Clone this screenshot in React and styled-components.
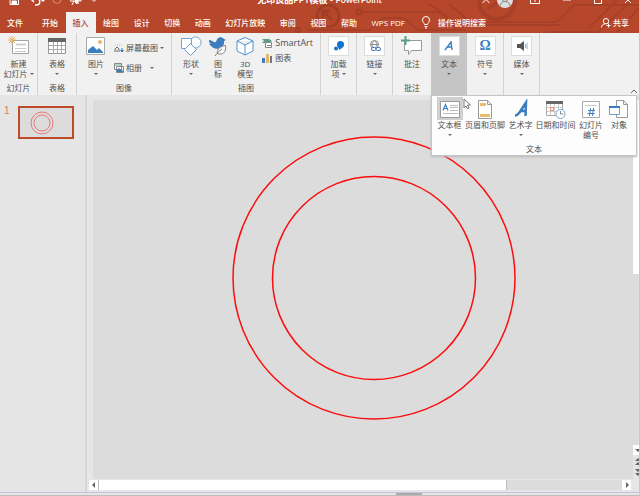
import { useState } from "react";
import styled, { createGlobalStyle } from "styled-components";

const tabs = ["开始", "插入", "绘图", "设计", "切换", "动画", "幻灯片放映", "审阅", "视图", "帮助", "WPS PDF"];

function App() {
  const [activeTab, setActiveTab] = useState("插入");
  const [textOpen, setTextOpen] = useState(true);

  return (
    <Window>
      <GlobalStyle />
      <Header>
        <Circuit />
        <TitleBar>
          <TitleRow>
            <QuickAccess>
              <TitleButton aria-label="保存" $width={28}><SaveIcon /></TitleButton>
              <TitleButton aria-label="撤消" $width={18}><UndoIcon /></TitleButton>
              <TitleButton aria-label="恢复" $width={22}><RedoIcon /></TitleButton>
              <TitleButton aria-label="从头开始" $width={16}><ShowIcon /></TitleButton>
              <TitleButton aria-label="自定义" $width={20}><ChevronIcon /></TitleButton>
            </QuickAccess>
            <Title>无印良品PPT模板 - PowerPoint</Title>
            <WindowButtons>
              <TitleButton aria-label="折叠" $width={18}><CaretUpIcon /></TitleButton>
              <TitleButton aria-label="帐户" $width={20}><AvatarIcon /></TitleButton>
              <TitleButton aria-label="功能区显示选项" $width={40}><RibbonIcon /></TitleButton>
              <TitleButton aria-label="最小化" $width={24}><MinIcon /></TitleButton>
              <TitleButton aria-label="最大化" $width={37}><MaxIcon /></TitleButton>
              <TitleButton aria-label="关闭" $width={23}><CloseIcon /></TitleButton>
            </WindowButtons>
          </TitleRow>
        </TitleBar>
        <TabBar>
          <FileTab>文件</FileTab>
          <Tabs>
            {tabs.map((tab) => (
              <Tab key={tab} $active={tab === activeTab} onClick={() => setActiveTab(tab)}>
                {tab}
              </Tab>
            ))}
          </Tabs>
          <Search><BulbIcon />操作说明搜索</Search>
          <Share><PersonIcon />共享</Share>
        </TabBar>
      </Header>

      <Ribbon>
        <Group $width={38}>
          <Tool><NewSlideIcon /><span>新建</span><Drop>幻灯片</Drop></Tool>
          <GroupName>幻灯片</GroupName>
        </Group>
        <Group $width={39}>
          <Tool><TableIcon /><span>表格</span><Drop /></Tool>
          <GroupName>表格</GroupName>
        </Group>
        <Group $width={95}>
          <GroupBody>
            <Tool><PictureIcon /><span>图片</span><Drop /></Tool>
            <SmallTools $gap={10}>
              <SmallTool><ScreenshotIcon /><Drop>屏幕截图</Drop></SmallTool>
              <SmallTool><AlbumIcon /><Drop $gap={8}>相册</Drop></SmallTool>
            </SmallTools>
          </GroupBody>
          <GroupName>图像</GroupName>
        </Group>
        <Group $width={149}>
          <GroupBody>
            <Tool><ShapesIcon /><span>形状</span><Drop /></Tool>
            <Tool $width={20}><BirdIcon /><span>图</span><span>标</span></Tool>
            <Tool><CubeIcon /><span>3D</span><span>模型</span></Tool>
            <SmallTools $gap={5}>
              <SmallTool $large><SmartArtIcon />SmartArt</SmallTool>
              <SmallTool><ChartIcon />图表</SmallTool>
            </SmallTools>
          </GroupBody>
          <GroupName>插图</GroupName>
        </Group>
        <Group $width={36}>
          <Tool><Tile><AddInIcon /></Tile><span>加载</span><Drop>项</Drop></Tool>
        </Group>
        <Group $width={36}>
          <Tool><Tile><LinkIcon /></Tile><span>链接</span><Drop /></Tool>
        </Group>
        <Group $width={38} $plain>
          <Tool><CommentIcon /><span>批注</span></Tool>
          <GroupName>批注</GroupName>
        </Group>
        <Group $width={36} $pressed={textOpen} $plain>
          <Tool aria-expanded={textOpen} onClick={() => setTextOpen(!textOpen)}>
            <Tile><SmallLetterIcon /></Tile><span>文本</span><Drop />
          </Tool>
        </Group>
        <Group $width={37}>
          <Tool><Tile><Omega>Ω</Omega></Tile><span>符号</span><Drop /></Tool>
        </Group>
        <Group $width={36}>
          <Tool><Tile><SpeakerIcon /></Tile><span>媒体</span><Drop /></Tool>
        </Group>
        <Collapse aria-label="折叠功能区"><CollapseIcon /></Collapse>

        {textOpen && (
          <Popup>
            <PopupTools>
              <PopupTool $width={27} $hover><TextBoxIcon /><span>文本框</span><Drop /></PopupTool>
              <PopupTool $width={42}><HeaderFooterIcon /><span>页眉和页脚</span></PopupTool>
              <PopupTool $width={27}><WordArtIcon /><span>艺术字</span><Drop /></PopupTool>
              <PopupTool $width={41}><DateIcon /><span>日期和时间</span></PopupTool>
              <PopupTool $width={28}><NumberIcon /><span>幻灯片</span><span>编号</span></PopupTool>
              <PopupTool $width={26}><ObjectIcon /><span>对象</span></PopupTool>
            </PopupTools>
            <GroupName>文本</GroupName>
            <Pointer />
          </Popup>
        )}
      </Ribbon>

      <Workspace>
        <Thumbnails>
          <SlideNumber>1</SlideNumber>
          <Thumbnail aria-label="幻灯片 1">
            <svg width="24" height="24" viewBox="0 0 24 24" fill="none" stroke="#e87a7a">
              <circle cx="12" cy="12" r="11" />
              <circle cx="12" cy="12" r="8" />
            </svg>
          </Thumbnail>
        </Thumbnails>
        <Editor>
          <Stage>
            <Slide>
              <svg width="284" height="284" viewBox="0 0 284 284" fill="none" stroke="#fb0d0d" strokeWidth="1.5">
                <circle cx="142" cy="142" r="141" />
                <circle cx="142" cy="142" r="101.5" />
              </svg>
            </Slide>
            <VerticalBar>
              <VerticalThumb />
              <ScrollButton aria-label="向下"><Arrow d="M1 3h6l-3 3z" /></ScrollButton>
              <PageButton aria-label="上一张"><Arrow d="M1 4l3-3 3 3zM1 8l3-3 3 3z" /></PageButton>
              <PageButton aria-label="下一张"><Arrow d="M1 0h6l-3 3zM1 4h6l-3 3z" /></PageButton>
            </VerticalBar>
          </Stage>
          <HorizontalBar>
            <ScrollButton aria-label="向左"><Arrow d="M5 1v6l-3-3z" /></ScrollButton>
            <HorizontalTrack><HorizontalThumb /></HorizontalTrack>
            <ScrollButton aria-label="向右"><Arrow d="M3 1v6l3-3z" /></ScrollButton>
          </HorizontalBar>
        </Editor>
      </Workspace>
      <NotesEdge><NotesGrip /></NotesEdge>
    </Window>
  );
}

export default App;

/* icons */

function Icon({ w = 20, h = 20, children }) {
  return (
    <svg width={w} height={h} viewBox={`0 0 ${w} ${h}`} fill="none" stroke="currentColor" aria-hidden="true">
      {children}
    </svg>
  );
}

const Arrow = ({ d }) => (
  <Icon w={8} h={8}><path d={d} fill="#666" stroke="none" /></Icon>
);

const SaveIcon = () => (
  <Icon w={10} h={10}><path d="M1 .5h8.500v9h-8.500zM3 .5v3h4v-3" /><path d="M3 6h4.500v3.500h-4.500z" fill="currentColor" /></Icon>
);
const UndoIcon = () => (
  <Icon w={16} h={12}><path d="M5 1L1.500 4.500 5 8M2 4.500h5.500a3 3 0 0 1 0 6.500H6" strokeWidth="1.500" /><path d="M12 6h4l-2 2z" fill="currentColor" stroke="none" /></Icon>
);
const RedoIcon = () => (
  <Icon w={12} h={12}><path d="M9 2a4.200 4.200 0 1 1-6 0" stroke="#d4816c" strokeWidth="1.300" /></Icon>
);
const ShowIcon = () => (
  <Icon w={12} h={14}><path d="M0 3h11v5H0zM4 8l-2 4M5 8l2 3" /><path d="M5 4l6 3-3 1 1 3-4-1z" fill="currentColor" stroke="none" /></Icon>
);
const ChevronIcon = () => <Icon w={6} h={6}><path d="M1 2.500l2 2 2-2" /></Icon>;
const CaretUpIcon = () => <Icon w={10} h={8}><path d="M1.500 7L5 3.500 8.500 7" /></Icon>;
const AvatarIcon = () => (
  <Icon w={16} h={16}>
    <circle cx="8" cy="8" r="8" fill="#dedede" stroke="none" />
    <circle cx="8" cy="6.500" r="3" stroke="#888" />
    <path d="M3 14c0-6 10-6 10 0" stroke="#888" />
  </Icon>
);
const RibbonIcon = () => <Icon w={10} h={8}><path d="M.5 0v7.500h9V0M5 1v5M.5 3.500h9" /></Icon>;
const MinIcon = () => <Icon w={8} h={2}><path d="M0 1h8" /></Icon>;
const MaxIcon = () => <Icon w={8} h={7}><path d="M.5 .5h7v6h-7z" /></Icon>;
const CloseIcon = () => <Icon w={8} h={8}><path d="M1 1l6 6M7 1L1 7" /></Icon>;
const BulbIcon = () => (
  <Icon w={10} h={13}><path d="M3.500 8.500C3.500 7 1.500 6.500 1.500 4a3.500 3.500 0 0 1 7 0c0 2.500-2 3-2 4.500zM3.500 10.500h3M4 12h2" /></Icon>
);
const PersonIcon = () => (
  <Icon w={10} h={10}><circle cx="5" cy="3.200" r="2.700" /><path d="M.5 9.500c0-2 1.500-3.500 3.500-3.500M7.500 5.500v4M5.500 7.500h4" /></Icon>
);

function Circuit() {
  return (
    <Backdrop width="640" height="33" viewBox="0 0 640 33" fill="none" stroke="#a23e25" strokeWidth="2" aria-hidden="true">
      <circle cx="329" cy="16" r="11" strokeWidth="3" />
      <path d="M333 20l-8-8M324 18v-7h7" strokeWidth="3" />
      <circle cx="360" cy="12" r="2.500" />
      <path d="M363 12h77l13 10h105l17-17h65M308 30h63l12-12h22l14 12h48" stroke="#a74028" />
      <path d="M430 4l17 11 12 16M450 4l25 21h86" stroke="#a74028" />
      <circle cx="498" cy="1" r="18" strokeWidth="4" stroke="#a74028" />
      <path d="M489 9l20-14" strokeWidth="3" stroke="#a74028" />
      <path d="M547 32h52l34-32M618 0l-28 28M640 8l-22 24" stroke="#a74028" />
      <circle cx="299" cy="30" r="2" />
    </Backdrop>
  );
}

const NewSlideIcon = () => (
  <Icon w={22}>
    <path d="M4.500 4.500h16v13h-16z" fill="#fff" stroke="#a3a3a3" />
    <path d="M8 7.500h10v2H8z" fill="#ccc" stroke="none" />
    <path d="M7 12.500h11M7 15.500h11" stroke="#ccc" />
    <path d="M4 0v8M0 4h8M1 1l6 6M7 1L1 7" stroke="#ecae63" />
  </Icon>
);
const TableIcon = () => (
  <Icon w={20}>
    <path d="M1.500 3.500h17v14h-17z" fill="#fff" stroke="#999" />
    <path d="M1 2h18v4H1z" fill="#666" stroke="none" />
    <path d="M2 9.500h16M2 13.500h16M6.500 6v12M10.500 6v12M14.500 6v12" stroke="#aaa" />
  </Icon>
);
const PictureIcon = () => (
  <Icon w={20}>
    <path d="M.5 1.500h18v17H.5z" fill="#fff" stroke="#aaa" />
    <path d="M2 17v-3l5-4 4 4 2-2 4 4v1z" fill="#3c7dbd" stroke="none" />
    <circle cx="14" cy="6" r="2" fill="#efb568" stroke="none" />
  </Icon>
);
const ScreenshotIcon = () => (
  <Icon w={10} h={9}>
    <path d="M1 1h7" stroke="#bbb" strokeDasharray="1 1" />
    <path d="M1 8V5l2-2 2 2v3M3 8V6" stroke="#666" />
    <path d="M8 4v3M6.500 6.500h3L8 8z" stroke="#3c7dbd" fill="#3c7dbd" />
  </Icon>
);
const AlbumIcon = () => (
  <Icon w={10} h={10}>
    <path d="M.5 .5h7v6h-7zM2.500 3.500h7v6h-7z" stroke="#888" fill="#fff" />
    <path d="M3 9V7l2-2 2 2 1-1 1 3z" fill="#3c7dbd" stroke="none" />
    <path d="M1 2h6" stroke="#65a68e" />
  </Icon>
);
const ShapesIcon = () => (
  <Icon w={22}>
    <circle cx="15.500" cy="6.500" r="5.500" stroke="#75a5cf" fill="#fff" />
    <path d="M1.500 2.500h10v10h-10z" stroke="#75a5cf" fill="#fff" />
    <path d="M10.500 7.500l6 6-6 6-6-6z" stroke="#6d9ecb" fill="#fff" />
  </Icon>
);
const BirdIcon = () => (
  <Icon w={20}>
    <path d="M1 4c3 0 4 3 7 2 1-5 5-6 8-3l2 1-2 1c1 7-7 10-12 6l-3-3h2C1 7 1 6 1 4z" fill="#3c7dbd" stroke="none" />
    <path d="M17.500 9.500c1 7-3 10-8 8-1-5 3-7 8-8zM7 20c2-3 4-5 7-7" stroke="#888" fill="#f6f6f6" />
  </Icon>
);
const CubeIcon = () => (
  <Icon w={18}>
    <path d="M9 1.500l8 3.500v10l-8 4-8-4V5zM1 5l8 4 8-4M9 9v10" stroke="#4d93cf" fill="#fff" />
  </Icon>
);
const SmartArtIcon = () => (
  <Icon w={11} h={9}>
    <path d="M0 0h7l3 2-3 2H0l2-2z" fill="#5c9f82" stroke="none" />
    <path d="M3.500 3.500h6v5h-6zM5 6.500h4" stroke="#888" fill="#fff" />
  </Icon>
);
const ChartIcon = () => (
  <Icon w={11} h={10}>
    <path d="M0 5h3v5H0z" fill="#3c7dbd" stroke="none" />
    <path d="M4 1h3v9H4z" fill="#e9b56b" stroke="none" />
    <path d="M8 3h2v7H8z" fill="#777" stroke="none" />
  </Icon>
);
const AddInIcon = () => (
  <Icon w={12} h={12}>
    <circle cx="7.500" cy="4.500" r="3.500" fill="#0d73cb" stroke="none" />
    <circle cx="3" cy="8.500" r="2" fill="#0d73cb" stroke="none" />
    <path d="M5 5l4 3-3 2z" fill="#0d73cb" stroke="none" />
  </Icon>
);
const LinkIcon = () => (
  <Icon w={12} h={12}>
    <circle cx="5.500" cy="4.500" r="4" stroke="#888" />
    <path d="M1.500 4.500h8M5.500 .5c-3 3-3 5 0 8M5.500 .5c3 3 3 5 0 8" stroke="#888" />
    <rect x="2.500" y="7.500" width="4.500" height="3" rx="1.500" stroke="#4078b5" fill="#fff" />
    <rect x="7" y="7.500" width="4.500" height="3" rx="1.500" stroke="#4078b5" fill="#fff" />
  </Icon>
);
const CommentIcon = () => (
  <Icon w={22}>
    <path d="M3.500 4.500h17v10h-10l-3 4v-4h-4z" fill="#fff" stroke="#999" />
    <path d="M4.500 0v9M0 4.500h9" stroke="#5c9f82" strokeWidth="2" />
  </Icon>
);
const SmallLetterIcon = () => (
  <Icon w={10} h={10}>
    <path d="M1 9l6-8 1 8M3.500 6h4" stroke="#3c7dbd" strokeWidth="1.400" />
  </Icon>
);
const WordArtIcon = () => (
  <Icon w={20}>
    <path d="M4 16.500c2 0 3-1 4.500-3L15 3.500l-.5 13.500M8.500 12h6.500" stroke="#3c7dbd" strokeWidth="2.500" />
  </Icon>
);
const SpeakerIcon = () => (
  <Icon w={12} h={12}>
    <path d="M1 4h3l4-3v10L4 8H1z" fill="#555" stroke="none" />
    <path d="M9.500 4v4M11 2.500v7" stroke="#8db7db" />
  </Icon>
);
const CollapseIcon = () => <Icon w={8} h={6}><path d="M1 5l3-3 3 3" stroke="#666" /></Icon>;
const TextBoxIcon = () => (
  <Icon w={20}>
    <path d="M.5 2.500h19v16H.5z" fill="#fff" stroke="#999" />
    <path d="M3 11.500l2.500-6 2.500 6M4 9.500h3" stroke="#3c7dbd" strokeWidth="1.200" />
    <path d="M10 6.500h8M10 8.500h8M10 11.500h8M3 14.500h15" stroke="#bbb" />
  </Icon>
);
const HeaderFooterIcon = () => (
  <Icon w={16}>
    <path d="M1.500 1.500h9l4 4v14h-13zM10.500 1.500v4h4" fill="#fff" stroke="#999" />
    <path d="M3 4h6v3H3zM3 15h10v3H3z" fill="#e9bd6c" stroke="none" />
  </Icon>
);
const DateIcon = () => (
  <Icon w={20}>
    <path d="M.5 2.500h16v14H.5z" fill="#fff" stroke="#aaa" />
    <path d="M0 2h17v3H0z" fill="#666" stroke="none" />
    <path d="M1 8.500h15M1 12.500h15M4.500 5v11M8.500 5v11M12.500 5v11" stroke="#ccc" />
    <path d="M4.500 8.500h3v3h-3z" stroke="#ea8e72" />
    <circle cx="14.500" cy="15" r="4.500" fill="#fff" stroke="#7aa8d2" />
    <path d="M14.500 12v3h3" stroke="#888" />
  </Icon>
);
const NumberIcon = () => (
  <Icon w={20}>
    <path d="M1.500 2.500h17v16h-17z" fill="#fff" stroke="#aaa" />
    <path d="M4 6.500h12" stroke="#ccc" />
    <path d="M9.500 9l-1 8M12.500 9l-1 8M7 11.500h7M6.500 14.500h7" stroke="#3c7dbd" />
  </Icon>
);
const ObjectIcon = () => (
  <Icon w={20}>
    <path d="M7.500 1.500h7l4 4v13h-11zM14.500 1.500v4h4" fill="#fff" stroke="#999" />
    <path d="M.5 7.500h10v8H.5z" fill="#fff" stroke="#6fa3d0" />
    <path d="M0 7h11v2H0z" fill="#3c7dbd" stroke="none" />
  </Icon>
);

function Pointer() {
  return (
    <Cursor width="8" height="12" viewBox="0 0 8 12" aria-hidden="true">
      <path d="M1 1v9l2-2 1.500 3 1.500-1-1.500-3h3z" fill="#fff" stroke="#777" />
    </Cursor>
  );
}

/* styles */

const GlobalStyle = createGlobalStyle`
  * {
    box-sizing: border-box;
  }

  body {
    margin: 0;
    background: #e6e6e6;
    color: #505050;
    font: 8px/10px "Open Sans", "Noto Sans CJK SC", sans-serif;
  }

  button {
    display: flex;
    align-items: center;
    padding: 0;
    border: 0;
    background: none;
    color: inherit;
    font: inherit;
    white-space: nowrap;
    cursor: pointer;
  }

  svg {
    display: block;
    flex: none;
  }
`;

const Window = styled.div`
  display: flex;
  flex-direction: column;
  min-height: 100vh;
  border-right: 1px solid #c9c9c9;
`;

const Header = styled.header`
  position: relative;
  overflow: hidden;
  background: #b7472a;
  color: #fff;
`;

const Backdrop = styled.svg`
  position: absolute;
  top: 0;
  right: 0;
`;

const TitleBar = styled.div`
  position: relative;
  display: flex;
  align-items: flex-end;
  height: 12px;
`;

const TitleRow = styled.div`
  display: flex;
  flex: 1;
  align-items: center;
  height: 24px;
`;

const QuickAccess = styled.div`
  display: flex;
  flex: 1;
`;

const WindowButtons = styled(QuickAccess)`
  justify-content: flex-end;
`;

const TitleButton = styled.button`
  justify-content: center;
  width: ${(props) => props.$width}px;
  height: 24px;
`;

const Title = styled.h1`
  margin: 0;
  font-family: Lato, "Noto Sans CJK SC", sans-serif;
  font-size: 9px;
  font-weight: 600;
  white-space: nowrap;
`;

const TabBar = styled.div`
  position: relative;
  display: flex;
  height: 21px;
`;

const FileTab = styled.button`
  padding: 0 12px 0 7px;
  font-weight: 500;
`;

const Tabs = styled.nav`
  display: flex;
  flex: 0 1 59%;
  justify-content: space-between;
`;

const Tab = styled.button`
  padding: 0 7px;
  font-weight: 500;
  background: ${(props) => (props.$active ? "#f1f1f1" : "none")};
  color: ${(props) => (props.$active ? "#b7472a" : "#fff")};
`;

const Search = styled.button`
  gap: 7px;
  padding-left: 9px;
  font-weight: 500;
`;

const Share = styled.button`
  gap: 2px;
  margin-left: auto;
  padding-right: 10px;
  font-weight: 500;
`;

const Ribbon = styled.section`
  position: relative;
  display: flex;
  height: 62px;
  background: #f1f1f1;
`;

const Group = styled.div`
  display: flex;
  flex-direction: column;
  flex: 0 0 ${(props) => props.$width}px;
  justify-content: space-between;
  align-items: center;
  min-width: 0;
  padding: 3px 0 2px;
  background: ${(props) => (props.$pressed ? "#c5c5c5" : "none")};
  border-right: ${(props) => (props.$plain ? "0" : "1px solid #d2d2d2")};
`;

const GroupBody = styled.div`
  display: flex;
  align-self: stretch;
  justify-content: space-between;
  padding: 0 7px 0 2px;
`;

const GroupName = styled.div`
  text-align: center;
`;

const Tool = styled.button`
  flex-direction: column;
  width: ${(props) => props.$width || 34}px;

  > svg {
    margin-bottom: 3px;
  }
`;

const Tile = styled.span`
  display: flex;
  align-items: center;
  justify-content: center;
  width: 21px;
  height: 20px;
  margin-bottom: 3px;
  border: 1px solid #dcdcdc;
  background: #fff;
`;

const Omega = styled.span`
  color: #3c7dbd;
  font: bold 14px/16px "Liberation Serif", serif;
`;

const Drop = styled.span`
  display: flex;
  align-items: center;
  gap: ${(props) => props.$gap || 2}px;
  min-height: 10px;

  &::after {
    content: "";
    border: 2px solid transparent;
    border-top-color: #666;
    border-bottom: 0;
  }
`;

const SmallTools = styled.div`
  display: flex;
  flex-direction: column;
  gap: ${(props) => props.$gap}px;
  padding-top: ${(props) => (props.$gap > 5 ? 7 : 2)}px;
`;

const SmallTool = styled.button`
  gap: 2px;
  font-size: ${(props) => (props.$large ? 9 : 8)}px;
`;

const Collapse = styled.button`
  align-self: flex-end;
  margin-left: auto;
  padding: 0 1px 1px;
`;

const Popup = styled.div`
  position: absolute;
  top: 100%;
  right: 2px;
  z-index: 1;
  padding-bottom: 1px;
  border: 1px solid #c6c6c6;
  background: #fdfdfd;
  box-shadow: 0 1px 2px #bbb;
`;

const PopupTools = styled.div`
  display: flex;
  gap: 1px;
  padding: 1px 4px 4px;
`;

const PopupTool = styled.button`
  flex-direction: column;
  justify-content: flex-start;
  width: ${(props) => props.$width}px;

  > svg {
    box-sizing: content-box;
    padding: 2px 3px 1px;
    background: ${(props) => (props.$hover ? "#d0d0d0" : "none")};
  }
`;

const Cursor = styled.svg`
  position: absolute;
  top: 2px;
  left: 31px;
`;

const Workspace = styled.main`
  display: flex;
  flex: 1;
`;

const Thumbnails = styled.aside`
  display: flex;
  align-items: flex-start;
  flex: 0 0 87px;
  gap: 8px;
  padding: 11px 0 0 4px;
  border-right: 2px solid #d7d7d7;
  background: #e5e5e5;
`;

const SlideNumber = styled.span`
  color: #df7866;
  font: 10px/10px "Liberation Sans", sans-serif;
`;

const Thumbnail = styled.button`
  width: 56px;
  height: 33px;
  padding-left: 10px;
  border: 2px solid #be4a2c;
  background: #dcdcdc;
`;

const Editor = styled.section`
  display: flex;
  flex: 1;
  flex-direction: column;
`;

const Stage = styled.div`
  display: flex;
  flex: 1;
  padding: 5px 0 0 6px;
`;

const Slide = styled.div`
  display: flex;
  flex: 1;
  justify-content: center;
  align-items: flex-start;
  padding: 36px 0 0 22px;
  background: #dcdcdc;
`;

const VerticalBar = styled.div`
  display: flex;
  flex-direction: column;
  width: 6px;
  overflow: hidden;
  background: #dcdcdc;
`;

const VerticalThumb = styled.div`
  height: 46%;
  margin-bottom: auto;
  background: #fff;
`;

const ScrollButton = styled.button`
  justify-content: center;
  min-width: 9px;
  height: 10px;
  background: #fff;
`;

const PageButton = styled(ScrollButton)`
  height: 12px;
  background: #e5e5e5;
`;

const HorizontalBar = styled.div`
  display: flex;
  margin-left: 2px;
  padding: 1px 8px 2px 0;
`;

const HorizontalTrack = styled.div`
  flex: 1;
  background: #dcdcdc;
`;

const HorizontalThumb = styled.div`
  width: 78%;
  height: 10px;
  border: solid #bdbdbd;
  border-width: 0 1px;
  background: #fff;
`;

const NotesEdge = styled.footer`
  height: 4px;
  border-top: 1px solid #c0c6d2;
  border-bottom: 1px solid #bdbdbd;
`;

const NotesGrip = styled.div`
  width: 26px;
  height: 2px;
  margin-left: 62%;
  background: #aaa;
`;
